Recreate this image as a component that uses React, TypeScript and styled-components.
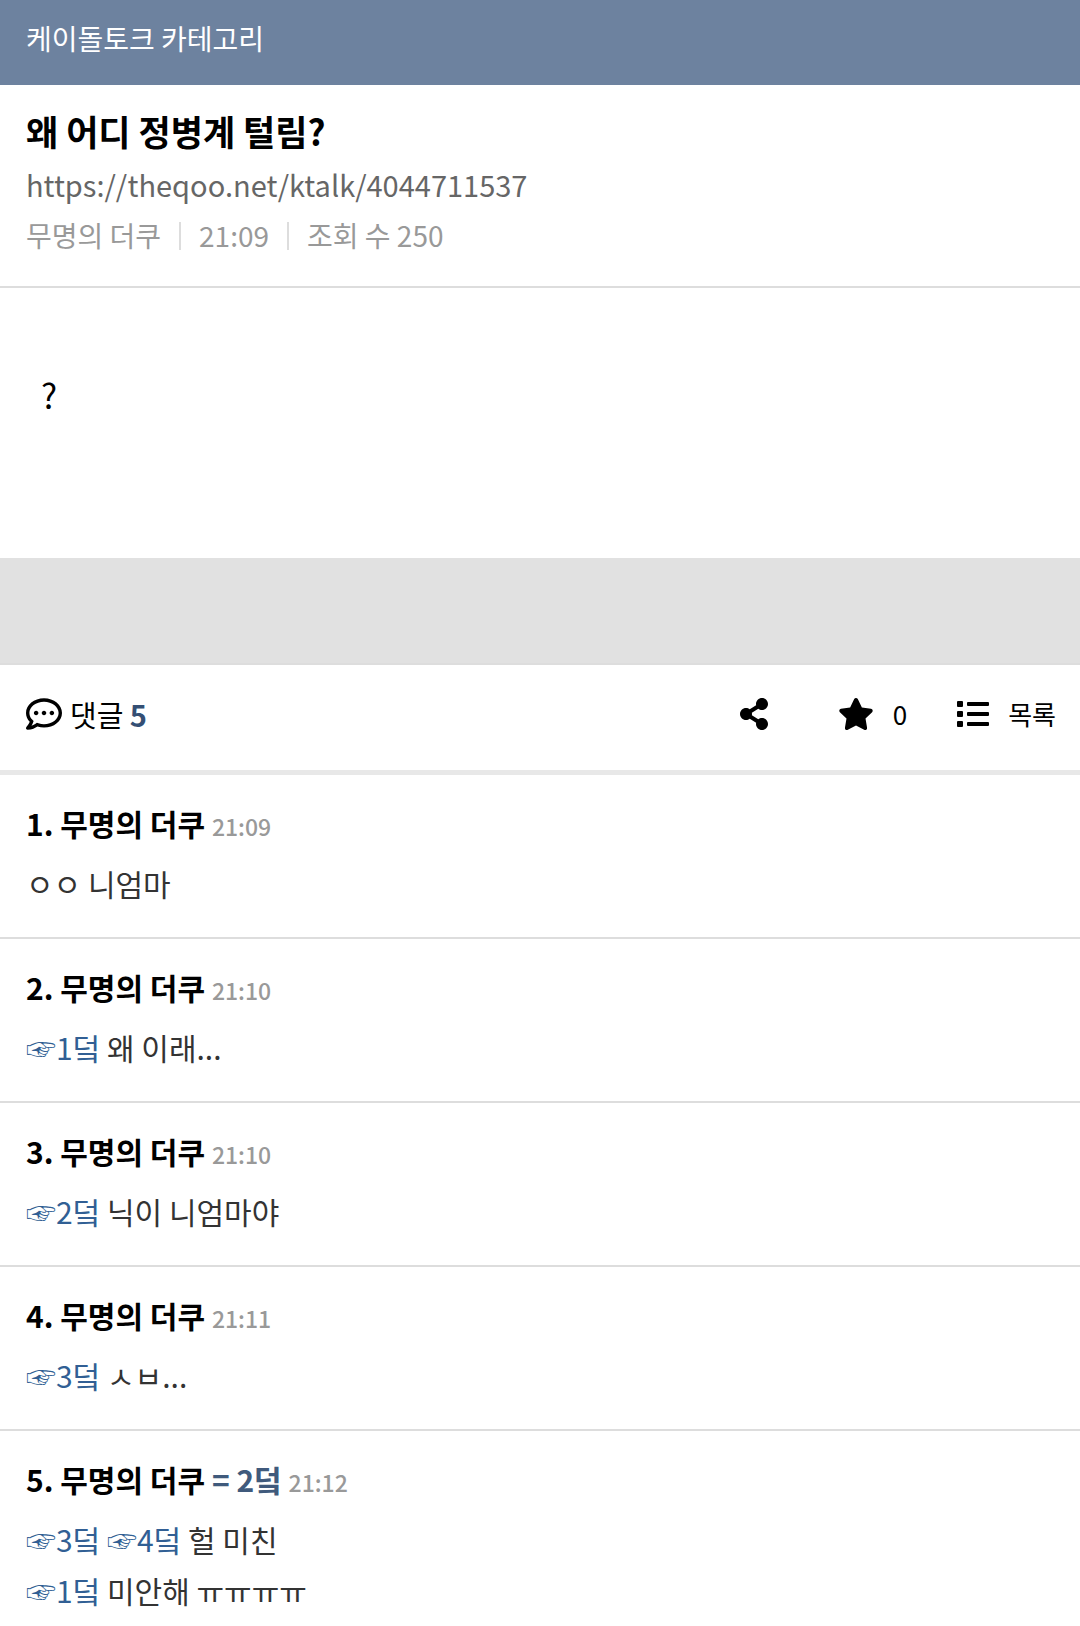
import React from "react";
import styled, { createGlobalStyle } from "styled-components";
import { FaList, FaRegCommentDots, FaShareAlt, FaStar } from "react-icons/fa";

const GlobalStyle = createGlobalStyle`
  * { box-sizing: border-box; }
  body {
    margin: 0;
    background: #fff;
    color: #000;
    font-family: "Noto Sans CJK KR", "Noto Sans", sans-serif;
    font-size: 30px;
  }
  a { color: inherit; text-decoration: none; }
`;

const CategoryBar = styled.header`
  padding: 16px 26px 25px;
  background: #6d829f;
  color: #fff;
  font-size: 28px;
  line-height: 44px;
`;

const PostHeader = styled.section`
  padding: 20px 26px 25px;
  border-bottom: 2px solid #ddd;
`;

const Title = styled.h1`
  margin: 0;
  font-size: 35px;
  font-weight: 700;
  line-height: 51px;
`;

const PostUrl = styled.a`
  display: block;
  margin-top: 3px;
  color: #666;
  font-size: 29px;
  line-height: 51px;
`;

const Meta = styled.div`
  display: flex;
  align-items: center;
  color: #999;
  font-size: 28px;
  line-height: 51px;
`;

const MetaItem = styled.span`
  display: flex;
  align-items: center;

  & + &::before {
    content: "";
    width: 2px;
    height: 28px;
    margin: 0 18px;
    background: #ddd;
  }
`;

const PostBody = styled.article`
  padding: 81px 41px 138px;
  font-size: 34px;
  line-height: 51px;

  p { margin: 0; }
`;

const AdSlot = styled.div`
  height: 107px;
  background: #e1e1e1;
  border-bottom: 2px solid #ddd;
`;

const Toolbar = styled.div`
  display: flex;
  align-items: center;
  justify-content: space-between;
  height: 110px;
  padding: 0 24px 8px 26px;
  border-bottom: 5px solid #e8e8e8;
`;

const CommentCount = styled.div`
  display: flex;
  align-items: center;
  gap: 8px;
  font-size: 29px;

  strong { color: #344f74; }
`;

const Actions = styled.div`
  display: flex;
  align-items: center;
  gap: 50px;
`;

const ActionButton = styled.button`
  display: flex;
  align-items: center;
  gap: 19px;
  min-width: 50px;
  padding: 0;
  border: 0;
  background: none;
  color: #000;
  font-family: inherit;
  font-size: 26px;
  cursor: pointer;
`;

const CommentList = styled.ol`
  margin: 0;
  padding: 0;
  list-style: none;
`;

const CommentItem = styled.li`
  padding: 26px 26px 28px;
  border-bottom: 2px solid #ddd;

  &:last-child {
    padding-bottom: 0;
    border-bottom: 0;
  }
`;

const CommentHead = styled.div`
  font-weight: 700;
  line-height: 44px;
`;

const SameAuthor = styled.span`
  color: #405a7c;
`;

const Time = styled.time`
  color: #999;
  font-size: 23px;
  font-weight: 500;
  line-height: 1;
`;

const CommentText = styled.p`
  margin: 13px 0 0;
  color: #333;
  line-height: 51px;
`;

const Reply = styled.a`
  && { color: #315f94; }
`;

type Line = { replies?: number[]; text: string };
type Comment = { time: string; same?: string; lines: Line[] };

const comments: Comment[] = [
  { time: "21:09", lines: [{ text: "ㅇㅇ 니엄마" }] },
  { time: "21:10", lines: [{ replies: [1], text: "왜 이래..." }] },
  { time: "21:10", lines: [{ replies: [2], text: "닉이 니엄마야" }] },
  { time: "21:11", lines: [{ replies: [3], text: "ㅅㅂ..." }] },
  {
    time: "21:12",
    same: "= 2덬",
    lines: [
      { replies: [3, 4], text: "헐 미친" },
      { replies: [1], text: "미안해 ㅠㅠㅠㅠ" },
    ],
  },
];

export default function App() {
  return (
    <>
      <GlobalStyle />
      <CategoryBar>
        <a href="#category">케이돌토크 카테고리</a>
      </CategoryBar>
      <main>
        <PostHeader>
          <Title>왜 어디 정병계 털림?</Title>
          <PostUrl href="https://theqoo.net/ktalk/4044711537">
            https://theqoo.net/ktalk/4044711537
          </PostUrl>
          <Meta>
            <MetaItem>무명의 더쿠</MetaItem>
            <MetaItem>21:09</MetaItem>
            <MetaItem>조회 수 250</MetaItem>
          </Meta>
        </PostHeader>
        <PostBody>
          <p>?</p>
        </PostBody>
        <AdSlot />
        <Toolbar>
          <CommentCount>
            <FaRegCommentDots size={36} />
            <span>
              댓글 <strong>5</strong>
            </span>
          </CommentCount>
          <Actions>
            <ActionButton type="button" aria-label="공유">
              <FaShareAlt size={32} />
            </ActionButton>
            <ActionButton type="button">
              <FaStar size={36} />
              <span>0</span>
            </ActionButton>
            <ActionButton as="a" href="#list">
              <FaList size={32} />
              <span>목록</span>
            </ActionButton>
          </Actions>
        </Toolbar>
        <CommentList>
          {comments.map((comment, index) => (
            <CommentItem key={index} id={`c${index + 1}`}>
              <CommentHead>
                {index + 1}. 무명의 더쿠{" "}
                {comment.same && <SameAuthor>{comment.same} </SameAuthor>}
                <Time>{comment.time}</Time>
              </CommentHead>
              <CommentText>
                {comment.lines.map((line, i) => (
                  <React.Fragment key={i}>
                    {i > 0 && <br />}
                    {line.replies?.map((n) => (
                      <React.Fragment key={n}>
                        <Reply href={`#c${n}`}>☞{n}덬</Reply>{" "}
                      </React.Fragment>
                    ))}
                    {line.text}
                  </React.Fragment>
                ))}
              </CommentText>
            </CommentItem>
          ))}
        </CommentList>
      </main>
    </>
  );
}
